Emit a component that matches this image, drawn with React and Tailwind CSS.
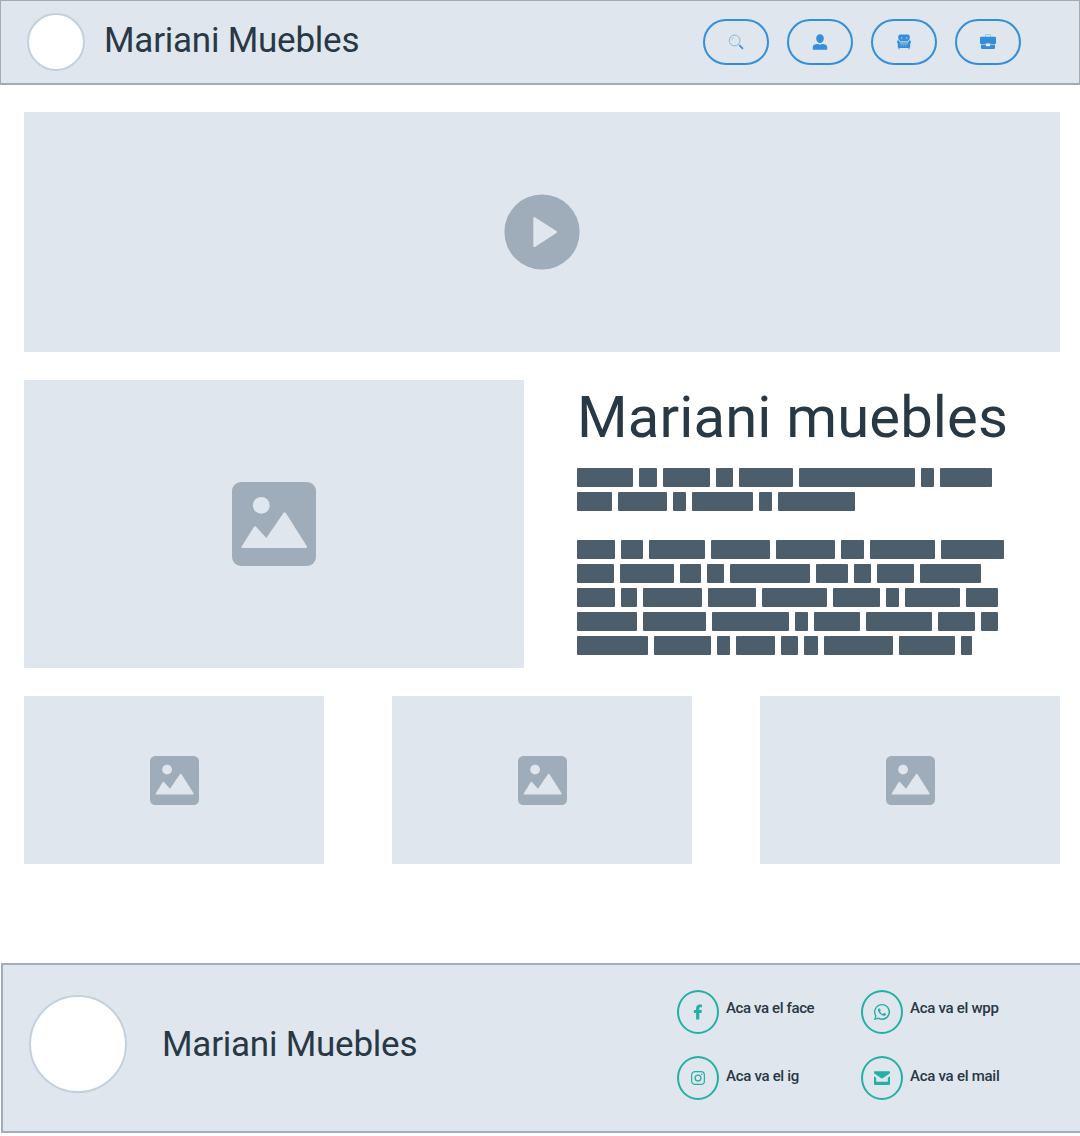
import React from "react";

const GAP = 6;

// Each line lists the left edge of every block, followed by the right edge of the last one.
const INTRO = [
  [0, 62.3, 86.3, 139, 162.3, 222.5, 344, 363, 415],
  [0, 41.2, 96, 115.3, 182, 201, 278],
];
const BODY = [
  [0, 43.5, 72, 133.7, 199.3, 264, 293, 364.2, 427],
  [0, 42.5, 103.2, 129.8, 153, 238.6, 277, 300, 343, 404],
  [0, 44, 65.8, 131.4, 185.2, 256.4, 309.2, 328, 389, 421],
  [0, 66, 134.6, 217.6, 237, 289, 361.4, 404, 421.4],
  [0, 76.5, 140.4, 159, 204.4, 227, 246.8, 322, 384.2, 395.5],
];

function Lines({ lines }) {
  return (
    <div className="flex flex-col gap-[5px]">
      {lines.map((edges, i) => (
        <div key={i} className="flex h-[19px] gap-[6px]">
          {edges.slice(0, -1).map((x, j) => {
            const last = j === edges.length - 2;
            return (
              <span
                key={j}
                className="shrink-0 rounded-[1px] bg-[#4c5d6b]"
                style={{ width: edges[j + 1] - x - (last ? 0 : GAP) }}
              />
            );
          })}
        </div>
      ))}
    </div>
  );
}

function Picture({ className }) {
  return (
    <svg viewBox="0 0 84 84" className={className}>
      <rect width="84" height="84" rx="9" fill="#9eadb9" />
      <circle cx="29.3" cy="23.3" r="8.4" fill="#dfe6ee" />
      <path
        d="M9.8 64.3 L21.7 45.2 Q23 43.4 24.3 45 L34.3 56 L51.3 31.2 Q52.7 29.3 54 31.2 L74.7 64 Q75.6 66 73.6 66 H10.5 Q8.8 66 9.8 64.3Z"
        fill="#dfe6ee"
      />
    </svg>
  );
}

function SearchIcon() {
  return (
    <svg viewBox="0 0 16 16" className="size-4" fill="none">
      <circle cx="6.6" cy="6.5" r="5.4" stroke="#7fb9cf" strokeWidth="1" />
      <path d="M3.4 6.4A3.2 3.2 0 0 1 6.3 3.3" stroke="#9cc5d6" strokeWidth=".7" />
      <path d="M10.4 10.3l1.5 1.5" stroke="#7fb9cf" strokeWidth=".8" />
      <path d="M11.8 11.7l2.7 2.7" stroke="#348edb" strokeWidth="1.7" strokeLinecap="round" />
    </svg>
  );
}

function UserIcon() {
  return (
    <svg viewBox="0 0 16 16" className="size-4" fill="#348edb">
      <path d="M8 .2c2.4 0 3.8 1.7 3.8 4.2S10 8.900 8 8.900 4.200 6.900 4.200 4.400 5.600.2 8 .2z" />
      <path d="M.8 15.800v-2.300C.8 11 3 10.300 5.300 10.100c1.700.5 3.700.5 5.400 0 2.300.2 4.500.9 4.500 3.400v2.300z" />
    </svg>
  );
}

function ArmchairIcon() {
  return (
    <svg viewBox="0 0 16 16" className="size-4" fill="#348edb">
      <path d="M2.300 5.200V2.300Q2.300.5 4.100.5h7.800q1.800 0 1.800 1.800v2.900q-1.600.5-1.700 2.300H4Q3.900 5.700 2.300 5.200z" />
      <path d="M1 8.200Q.9 6.200 2.300 6.200 3.600 6.300 3.600 8.300h8.800q0-2 1.300-2.100Q15.100 6.200 15 8.200q-.8.800-.8 2v3.300h-.6v1.800h-1v-1.400H3.400v1.400h-1v-1.800h-.6v-3.300Q1.800 9 1 8.200z" />
      <path d="M4 7.900h8M4 9.900h8" stroke="#b4d0d9" strokeWidth=".8" />
      <path d="M5.500 10.500v2M7.500 10.500v1.500M9.500 10.500v2" stroke="#8ec0d6" strokeWidth=".6" />
      <path d="M5 4h1.300M10 4h1.300" stroke="#dfe6ee" strokeWidth="1.100" />
    </svg>
  );
}

function BriefcaseIcon() {
  return (
    <svg viewBox="0 0 16 16" className="size-4" fill="#348edb">
      <path d="M5.500 3V.7h5V3" fill="none" stroke="#9cc7d0" strokeWidth="1" />
      <path d="M1 2.800h14q1 0 1 1v5.300q0 1-1 1h-4.500V9.500h-5v.6H1q-1 0-1-1V3.800q0-1 1-1z" />
      <path d="M1 11.100h5v1.200h4v-1.200h5v3q0 1-1 1H2q-1 0-1-1z" />
      <path d="M1 10.600h5M10 10.600h5" stroke="#8cbcd9" strokeWidth="1" />
      <rect x="6.500" y="9.900" width="3" height="2" fill="#edf2ee" />
    </svg>
  );
}

function FaceIcon() {
  return (
    <svg viewBox="0 0 16 16" className="size-4" fill="#24b0a4">
      <path d="M6.100 15.600V8.900H3.900V6h2.200V4.300C6.100 1.700 7.600.4 9.900.4c.9 0 1.700.1 2 .2v2.700h-1.300C9.600 3.300 9.300 3.800 9.300 4.600V6h2.600l-.4 2.900H9.300v6.700z" />
    </svg>
  );
}

function WhatsappIcon() {
  return (
    <svg viewBox="0 0 16 16" className="size-4" fill="#24b0a4">
      <path d="M13.600 2.300A7.850 7.850 0 0 0 8 0 7.930 7.930 0 0 0 1.100 11.900L0 16l4.200-1.100a7.900 7.900 0 0 0 3.800 1A7.930 7.930 0 0 0 13.600 2.300zM8 14.500a6.600 6.600 0 0 1-3.400-.9l-.2-.1-2.500.7.700-2.400-.2-.3A6.590 6.590 0 1 1 8 14.500zm3.600-4.900c-.2-.1-1.200-.6-1.400-.6-.2-.1-.300-.1-.400.1l-.600.800c-.1.100-.2.100-.400 0-.2-.1-.8-.3-1.600-1-.6-.500-1-1.200-1.100-1.400-.1-.2 0-.3.1-.4l.5-.6v-.3L6 4.700c-.2-.4-.3-.3-.4-.3h-.400c-.1 0-.4.1-.500.200-.2.2-.7.700-.7 1.700s.7 1.900.8 2c.1.100 1.400 2.100 3.400 3 .5.2.8.3 1.100.4.500.1.900.1 1.200.1.400-.1 1.200-.500 1.300-.900.200-.5.200-.9.100-.9-.1-.200-.2-.2-.3-.4z" />
    </svg>
  );
}

function InstagramIcon() {
  return (
    <svg viewBox="0 0 16 16" className="size-4" fill="none" stroke="#24b0a4">
      <rect x="1.600" y="1.600" width="12.800" height="12.800" rx="3.500" strokeWidth="1.200" />
      <circle cx="8" cy="8.100" r="2.900" strokeWidth="1.300" />
      <circle cx="11.700" cy="4.300" r=".8" fill="#24b0a4" stroke="none" />
    </svg>
  );
}

function MailIcon() {
  return (
    <svg viewBox="0 0 16 16" className="size-4" fill="#24b0a4">
      <path d="M.6 1.300h14.800q.6 0 .6.600v1.400L9.200 8Q8 8.800 6.800 8L0 3.300V1.900q0-.6.600-.6z" />
      <path d="M0 6.200l2.200 1.500v4h11.600v-4L16 6.200v7.600q0 1.200-1.200 1.200H1.200Q0 15 0 13.800z" />
    </svg>
  );
}

const NAV = [
  { Icon: SearchIcon, label: "Search" },
  { Icon: UserIcon, label: "Account" },
  { Icon: ArmchairIcon, label: "Furniture" },
  { Icon: BriefcaseIcon, label: "Business" },
].map(({ Icon }) => Icon);

const CONTACTS = [
  { Icon: FaceIcon, label: "Aca va el face", tracking: "tracking-[-0.38px]" },
  { Icon: WhatsappIcon, label: "Aca va el wpp", tracking: "tracking-[-0.28px]" },
  { Icon: InstagramIcon, label: "Aca va el ig", tracking: "tracking-[-0.3px]" },
  { Icon: MailIcon, label: "Aca va el mail", tracking: "tracking-[-0.26px]" },
];

export default function App() {
  return (
    <div className="h-[1136px] w-[1080px] overflow-hidden bg-white font-['Roboto',sans-serif] text-[#283845]">
      <header className="flex h-[85px] items-start border border-b-2 border-[#9eadb9] bg-[#dfe6ee] pl-[26px] pr-[58px]">
        <div className="mt-3 size-[58px] rounded-full border-2 border-[#c3d1dc] bg-white" />
        <h1 className="ml-[19px] mt-[19px] whitespace-nowrap text-[35px] leading-[42px] tracking-[-0.23px]">Mariani Muebles</h1>
        <nav className="ml-auto mt-[18px] flex gap-[18px]">
          {NAV.map((Icon, i) => (
            <button key={i} className="flex h-[46px] w-[66px] items-center justify-center rounded-full border-2 border-[#348edb]">
              <Icon />
            </button>
          ))}
        </nav>
      </header>

      <main className="pl-6 pr-5 pt-[27px]">
        <section className="flex h-60 items-center justify-center bg-[#dfe6ee]">
          <svg viewBox="0 0 76 76" className="size-[76px]">
            <circle cx="38" cy="38" r="37.600" fill="#9eadb9" />
            <path d="M29.300 24.500Q29.300 22.200 31.300 23.400L52.400 37Q54 38 52.400 39L31.300 52.700Q29.300 53.800 29.300 51.500z" fill="#dfe6ee" />
          </svg>
        </section>

        <section className="mt-7 flex h-72">
          <div className="flex w-[500px] shrink-0 items-center justify-center bg-[#dfe6ee]">
            <Picture className="size-[84px]" />
          </div>
          <div className="ml-[53px] flex flex-col">
            <h2 className="mb-4 mt-0.5 whitespace-nowrap text-[58px] leading-[70px] tracking-[0.14px]">Mariani muebles</h2>
            <Lines lines={INTRO} />
            <div className="h-[29px]" />
            <Lines lines={BODY} />
          </div>
        </section>

        <section className="mt-7 flex justify-between">
          {[0, 1, 2].map((i) => (
            <div key={i} className="flex h-[168px] w-[300px] items-center justify-center bg-[#dfe6ee]">
              <Picture className="size-[49px]" />
            </div>
          ))}
        </section>
      </main>

      <footer className="ml-px mt-[99px] flex h-[170px] border-2 border-r-0 border-[#9eadb9] bg-[#dfe6ee] pl-[26px]">
        <div className="mt-[30px] size-[98px] shrink-0 rounded-full border-2 border-[#c3d1dc] bg-white" />
        <p className="ml-[35px] mt-[59px] w-[260px] whitespace-nowrap text-[35px] leading-[42px] tracking-[-0.23px]">Mariani Muebles</p>
        <ul className="ml-auto mt-[25px] grid w-[403px] grid-cols-[184px_1fr] grid-rows-[44px_44px] gap-y-[22px]">
          {CONTACTS.map(({ Icon, label, tracking }, i) => (
            <li key={label} className="flex">
              <span className="flex h-11 w-[42px] items-center justify-center rounded-[50%] border-2 border-[#24b0a4]">
                <Icon />
              </span>
              <span className={`ml-[7px] whitespace-nowrap text-[15px] font-medium leading-[18px] ${i < 2 ? "mt-[9px]" : "mt-[11px]"} ${tracking}`}>
                {label}
              </span>
            </li>
          ))}
        </ul>
      </footer>
    </div>
  );
}
